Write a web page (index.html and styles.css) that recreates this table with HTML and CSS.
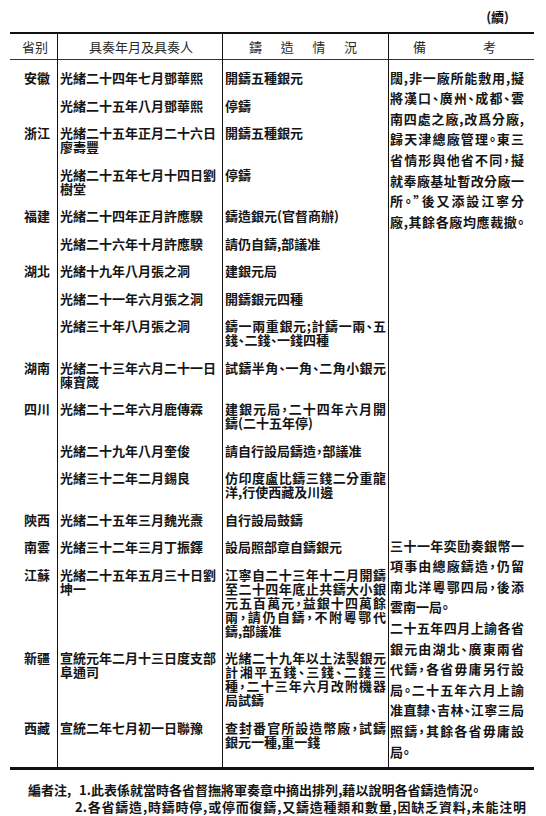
FILE: index.html
```html
<!DOCTYPE html>
<html lang="zh-Hant">
<head>
<meta charset="utf-8">
<title>各省鑄造銀元情況（續）</title>
<link rel="stylesheet" href="styles.css">
</head>
<body>
<div class="cont">(續)</div>
<div class="tbl">
  <div class="h c1">省别</div>
  <div class="h c2">具奏年月及具奏人</div>
  <div class="h c3"><span class="hs3"><span>鑄</span><span>造</span><span>情</span><span>況</span></span></div>
  <div class="h c4"><span class="hs4"><span>備</span><span>考</span></span></div>

  <div class="c1 d first">安徽</div>
  <div class="c2 d first">光緒二十四年七月鄧華熙</div>
  <div class="c3 d first">開鑄五種銀元</div>
  <div class="c4 note n1">
    <div class="ln j">闊,非一廠所能敷用,擬</div>
    <div class="ln j">將漢口、廣州、成都、雲</div>
    <div class="ln j">南四處之廠,改爲分廠,</div>
    <div class="ln j">歸天津總廠管理。東三</div>
    <div class="ln j">省情形與他省不同，擬</div>
    <div class="ln j">就奉廠基址暫改分廠一</div>
    <div class="ln j">所。”後又添設江寧分</div>
    <div class="ln j">廠,其餘各廠均應裁撤。</div>
  </div>

  <div class="c1 d"></div>
  <div class="c2 d">光緒二十五年八月鄧華熙</div>
  <div class="c3 d">停鑄</div>

  <div class="c1 d">浙江</div>
  <div class="c2 d">光緒二十五年正月二十六日<br>廖壽豐</div>
  <div class="c3 d">開鑄五種銀元</div>

  <div class="c1 d"></div>
  <div class="c2 d">光緒二十五年七月十四日劉<br>樹堂</div>
  <div class="c3 d">停鑄</div>

  <div class="c1 d">福建</div>
  <div class="c2 d">光緒二十四年正月許應騤</div>
  <div class="c3 d">鑄造銀元(官督商辦)</div>

  <div class="c1 d"></div>
  <div class="c2 d">光緒二十六年十月許應騤</div>
  <div class="c3 d">請仍自鑄,部議准</div>

  <div class="c1 d">湖北</div>
  <div class="c2 d">光緒十九年八月張之洞</div>
  <div class="c3 d">建銀元局</div>

  <div class="c1 d"></div>
  <div class="c2 d">光緒二十一年六月張之洞</div>
  <div class="c3 d">開鑄銀元四種</div>

  <div class="c1 d"></div>
  <div class="c2 d">光緒三十年八月張之洞</div>
  <div class="c3 d"><div class="j">鑄一兩重銀元;計鑄一兩、五</div><div>錢、二錢、一錢四種</div></div>

  <div class="c1 d">湖南</div>
  <div class="c2 d">光緒二十三年六月二十一日<br>陳寶箴</div>
  <div class="c3 d"><div class="j">試鑄半角、一角、二角小銀元</div></div>

  <div class="c1 d">四川</div>
  <div class="c2 d">光緒二十二年六月鹿傳霖</div>
  <div class="c3 d"><div class="j">建銀元局，二十四年六月開</div><div>鑄(二十五年停)</div></div>

  <div class="c1 d"></div>
  <div class="c2 d">光緒二十九年八月奎俊</div>
  <div class="c3 d">請自行設局鑄造，部議准</div>

  <div class="c1 d"></div>
  <div class="c2 d">光緒三十二年二月錫良</div>
  <div class="c3 d"><div class="j">仿印度盧比鑄三錢二分重龍</div><div>洋,行使西藏及川邊</div></div>

  <div class="c1 d">陝西</div>
  <div class="c2 d">光緒二十五年三月魏光燾</div>
  <div class="c3 d">自行設局鼓鑄</div>

  <div class="c1 d">南雲</div>
  <div class="c2 d">光緒三十二年三月丁振鐸</div>
  <div class="c3 d">設局照部章自鑄銀元</div>
  <div class="c4 note n2">
    <div class="ln j">三十一年奕劻奏銀幣一</div>
    <div class="ln j">項事由總廠鑄造，仍留</div>
    <div class="ln j">南北洋粵鄂四局，後添</div>
    <div class="ln">雲南一局。</div>
    <div class="ln j">二十五年四月上諭各省</div>
    <div class="ln j">銀元由湖北、廣東兩省</div>
    <div class="ln j">代鑄，各省毋庸另行設</div>
    <div class="ln j">局。二十五年六月上諭</div>
    <div class="ln j">准直隸、吉林、江寧三局</div>
    <div class="ln j">照鑄，其餘各省毋庸設</div>
    <div class="ln">局。</div>
  </div>

  <div class="c1 d">江蘇</div>
  <div class="c2 d">光緒二十五年五月三十日劉<br>坤一</div>
  <div class="c3 d">
    <div class="j">江寧自二十三年十二月開鑄</div>
    <div class="j">至二十四年底止共鑄大小銀</div>
    <div class="j">元五百萬元，益銀十四萬餘</div>
    <div class="j">兩，請仍自鑄，不附粵鄂代</div>
    <div>鑄,部議准</div>
  </div>

  <div class="c1 d">新疆</div>
  <div class="c2 d">宣統元年二月十三日度支部<br>阜通司</div>
  <div class="c3 d">
    <div class="j">光緒二十九年以土法製銀元</div>
    <div class="j">計湘平五錢、三錢、二錢三</div>
    <div class="j">種，二十三年六月改附機器</div>
    <div>局試鑄</div>
  </div>

  <div class="c1 d last">西藏</div>
  <div class="c2 d last">宣統二年七月初一日聯豫</div>
  <div class="c3 d last">
    <div class="j">查封番官所設造幣廠，試鑄</div>
    <div>銀元一種,重一錢</div>
  </div>
</div>
<div class="foot">
  <div class="fl"><span class="lab">編者注,</span><span class="ft j f1">1.此表係就當時各省督撫將軍奏章中摘出排列,藉以說明各省鑄造情況。</span></div>
  <div class="fl fl2"><span class="ft j f2">2.各省鑄造,時鑄時停,或停而復鑄,又鑄造種類和數量,因缺乏資料,未能注明</span></div>
</div>
</body>
</html>
```

FILE: styles.css
```css
html, body {
  margin: 0;
  padding: 0;
  background: #ffffff;
}
body {
  width: 546px;
  height: 816px;
  overflow: hidden;
  font-family: "Noto Sans CJK TC", "Noto Sans CJK SC", sans-serif;
  font-size: 13px;
  color: #151515;
}
.cont {
  height: 32px;
  line-height: 34px;
  text-align: right;
  padding-right: 37px;
  font-weight: 700;
}
.tbl {
  margin-left: 10px;
  width: 524px;
  display: grid;
  grid-template-columns: 47px 165px 166px 146px;
  border-top: 2px solid #111;
  border-bottom: 3px solid #111;
  font-feature-settings: "halt";
}
.tbl > div {
  box-sizing: border-box;
}
.c1 {
  grid-column: 1;
  text-align: right;
  padding-right: 7px;
}
.c2 {
  grid-column: 2;
  border-left: 1px solid #111;
  padding-left: 2px;
}
.c3 {
  grid-column: 3;
  border-left: 1px solid #111;
  padding-left: 2px;
  padding-right: 2px;
}
.c4 {
  grid-column: 4;
  border-left: 1px solid #111;
  padding-left: 1px;
}
.h {
  height: 26px;
  line-height: 25px;
  border-bottom: 1px solid #333;
  font-weight: 400;
  color: #2a2a2a;
}
.h.c1 {
  text-align: center;
  padding: 0 0 0 3px;
}
.h.c2 {
  text-align: center;
}
.hs3 {
  display: flex;
  justify-content: space-between;
  width: 108px;
  margin-left: 24px;
}
.hs4 {
  display: flex;
  justify-content: space-between;
  width: 83px;
  margin-left: 23px;
}
.d {
  padding-top: 7px;
  padding-bottom: 6.5px;
  line-height: 14px;
  font-weight: 700;
}
.first {
  padding-top: 11px;
}
.last {
  padding-bottom: 18px;
}
.c3 .j {
  width: 161px;
}
.j {
  text-align: justify;
  text-align-last: justify;
}
.note {
  line-height: 20.6px;
  font-weight: 700;
}
.note .ln {
  width: 134px;
}
.n1 {
  grid-row: span 14;
  padding-top: 7.7px;
}
.n2 {
  grid-row: span 4;
  padding-top: 2.7px;
}
.foot {
  margin-top: 11px;
  padding-left: 28px;
  line-height: 17px;
  font-weight: 700;
  font-feature-settings: "halt";
}
.fl {
  display: flex;
  white-space: nowrap;
}
.fl2 {
  padding-left: 47px;
}
.lab {
  display: inline-block;
  width: 51px;
}
.ft {
  display: inline-block;
}
.f1 {
  width: 400px;
}
.f2 {
  width: 451px;
}
```
